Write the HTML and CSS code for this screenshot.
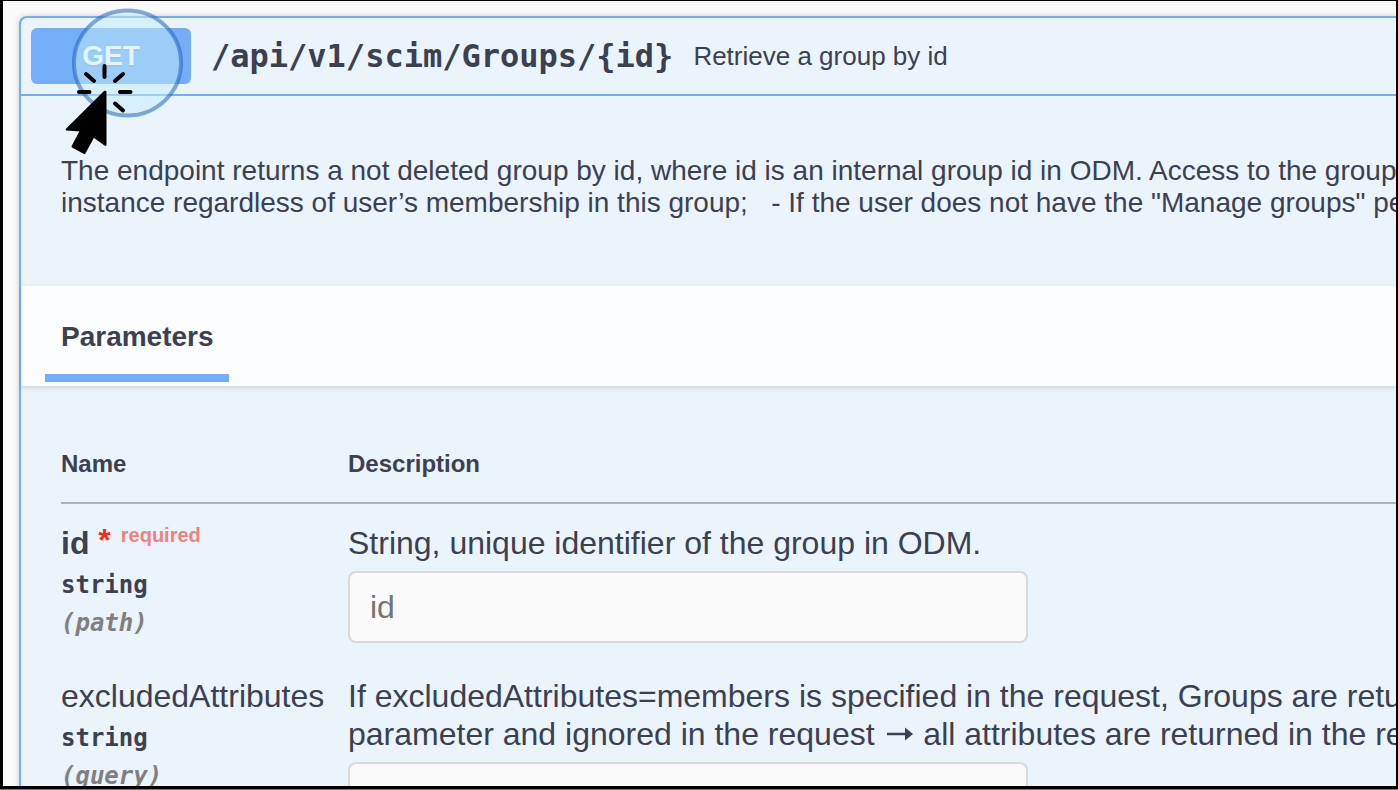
FILE: index.html
```html
<!DOCTYPE html>
<html lang="en">
<head>
<meta charset="utf-8">
<title>Groups API</title>
<link rel="stylesheet" href="styles.css">
</head>
<body>
<main class="frame">
  <section class="opblock">
    <header class="summary">
      <button class="method" type="button">GET</button>
      <span class="path">/api/v1/scim/Groups/{id}</span>
      <span class="summary-text">Retrieve a group by id</span>
    </header>
    <div class="description">
      <p>The endpoint returns a not deleted group by id, where id is an internal group id in ODM. Access to the group<br>instance regardless of user’s membership in this group; &nbsp; - If the user does not have the "Manage groups" pe</p>
    </div>
    <div class="tab-header">
      <h4 class="tab">Parameters</h4>
    </div>
    <div class="table-wrap">
      <table class="parameters">
        <thead>
          <tr><th class="col-name" scope="col">Name</th><th scope="col">Description</th></tr>
        </thead>
        <tbody>
          <tr>
            <td>
              <label class="name required" for="param-id">id&nbsp;<span class="star">*</span><span class="required-note">required</span></label>
              <div class="type">string</div>
              <div class="location">(path)</div>
            </td>
            <td>
              <p>String, unique identifier of the group in ODM.</p>
              <input id="param-id" class="field" type="text" placeholder="id">
            </td>
          </tr>
          <tr>
            <td>
              <label class="name" for="param-excluded">excludedAttributes</label>
              <div class="type">string</div>
              <div class="location">(query)</div>
            </td>
            <td>
              <p>If excludedAttributes=members is specified in the request, Groups are retu<br>parameter and ignored in the request <svg class="arrow" viewBox="0 0 28 20" aria-label="to"><path d="M1 9H22" fill="none" stroke="currentColor" stroke-width="2.500"/><path d="M19 2.500L27 9L19 15.500Z" fill="currentColor"/></svg> all attributes are returned in the re</p>
              <input id="param-excluded" class="field" type="text" placeholder="excludedAttributes">
            </td>
          </tr>
        </tbody>
      </table>
    </div>
  </section>
  <svg class="pointer" viewBox="60 0 130 160" aria-hidden="true">
    <ellipse cx="127.500" cy="63" rx="53.500" ry="52.500" fill="#c4edfa" fill-opacity=".5" stroke="#1b5fb4" stroke-opacity=".52" stroke-width="4"/>
    <g fill="none" stroke="#000" stroke-width="4" stroke-linecap="round">
      <path d="M104.500 66V77M86 74L94 81M123 74L115 81M79 92H89.500M120 92H130.500M115 103.500L123 110.500"/>
    </g>
    <path d="M104.700 91.700L66.700 129.500L81 130.500L72.500 146.500L84.500 153L93.500 136.500L105.500 145V92Z" fill="#000" stroke="#000" stroke-width="2" stroke-linejoin="round"/>
  </svg>
</main>
</body>
</html>
```
FILE: styles.css
```css
* { box-sizing: border-box; }
body {
  margin: 0;
  background: #777;
  color: #3b4151;
  font-family: "Liberation Sans", Arial, sans-serif;
}
p, h4 { margin: 0; }
.frame {
  position: relative;
  height: calc(100vh - 1px);
  overflow: hidden;
  padding: 15px 0 0 16px;
  border: solid #000;
  border-width: 1px 2px 3px 3px;
  background: #fafafa;
  white-space: nowrap;
}
.opblock {
  border: 2px solid #72adf9;
  border-right: 0;
  border-radius: 8px 0 0 8px;
  background: #ebf3fb;
  box-shadow: 0 0 6px rgba(0, 0, 0, .19);
}
.summary {
  display: flex;
  align-items: center;
  padding: 10px;
  border-bottom: 2px solid #72adf9;
}
.method {
  width: 160px;
  height: 56px;
  padding: 0;
  border: 0;
  border-radius: 6px;
  background: #74adf8;
  color: #fff;
  font: bold 28px "Liberation Sans", Arial, sans-serif;
  text-shadow: 0 2px 0 rgba(0, 0, 0, .1);
}
.path {
  padding: 0 20px;
  font: bold 32px "DejaVu Sans Mono", monospace;
}
.summary-text { font-size: 26px; }
.description {
  padding: 59px 0 67px 40px;
  font-size: 28px;
  line-height: 32px;
}
.tab-header {
  position: relative;
  display: flex;
  height: 100px;
  padding: 0 24px;
  background: #fcfdfe;
  box-shadow: 0 2px 4px rgba(0, 0, 0, .12);
}
.tab {
  margin-bottom: 4px;
  padding: 35px 15px 0 16px;
  border-bottom: 8px solid #74adf8;
  font-size: 28px;
  line-height: 32px;
}
.table-wrap { padding: 56px 0 40px 40px; }
.parameters {
  width: 100%;
  table-layout: fixed;
  border-collapse: separate;
  border-spacing: 0;
  font-size: 32px;
  line-height: 38px;
}
.parameters th {
  padding: 8px 0 24px;
  border-bottom: 2px solid #acb3bf;
  font-size: 24px;
  line-height: 28px;
  text-align: left;
}
.parameters .col-name { width: 287px; }
.parameters td {
  padding: 20px 0 14px;
  vertical-align: top;
}
.name {
  display: block;
  height: 38px;
  margin-bottom: 4px;
}
.required { font-weight: bold; }
.star {
  color: #f0301c;
  line-height: 20px;
  vertical-align: 3px;
}
.required-note {
  padding-left: 10px;
  color: #ed837d;
  font-size: 20px;
  line-height: 20px;
  vertical-align: 12px;
}
.type { font: bold 24px/38px "DejaVu Sans Mono", monospace; }
.location {
  color: #808080;
  font: italic bold 24px/38px "DejaVu Sans Mono", monospace;
}
.field {
  display: block;
  width: 680px;
  height: 72px;
  margin-top: 9px;
  padding: 0 20px;
  border: 2px solid #d9d9d9;
  border-radius: 8px;
  background: #fafafa;
  color: #3b4151;
  font: 32px "Liberation Sans", Arial, sans-serif;
}
.field::placeholder { color: #757575; }
.arrow {
  width: 28px;
  height: 20px;
  margin-left: 3px;
}
.pointer {
  position: absolute;
  top: -1px;
  left: 57px;
  width: 130px;
  height: 160px;
}
```
